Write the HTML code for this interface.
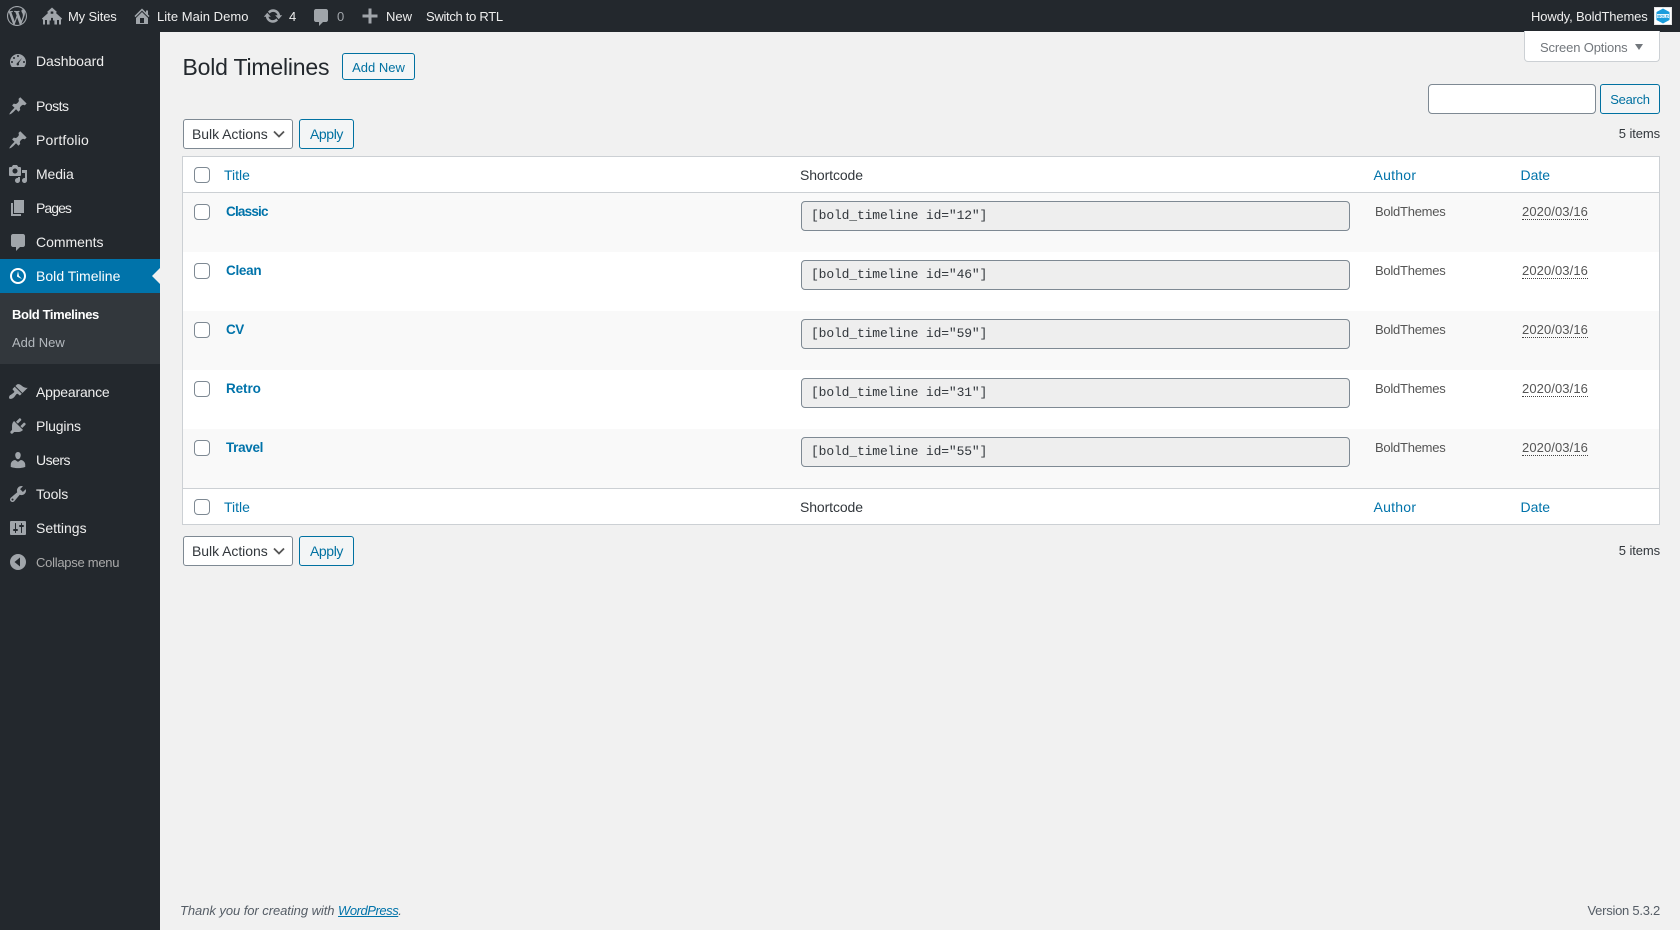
<!DOCTYPE html>
<html lang="en"><head><meta charset="utf-8"><title>Bold Timelines</title>
<style>
html,body{margin:0;padding:0;width:1680px;height:930px;overflow:hidden;background:#f1f1f1;font-family:"Liberation Sans",sans-serif;color:#32373c}
div,a,span.t,svg.i{position:absolute}
a{text-decoration:none}
.t{position:absolute;white-space:nowrap;line-height:20px;height:20px;font-size:14px}
svg.i{fill:#a0a5aa}
.bar{left:0;top:0;width:1680px;height:32px;background:#23282d}
.side{left:0;top:32px;width:160px;height:898px;background:#23282d}
.m{color:#eee;left:36px;letter-spacing:-.3px}
.btn{box-sizing:border-box;border:1px solid #0071a1;border-radius:3px;background:#f3f5f6;color:#0071a1;font-size:13px;text-align:center;line-height:28px;white-space:nowrap}
.sel{box-sizing:border-box;left:183px;width:110px;height:30px;border:1px solid #7e8993;border-radius:3px;background:#fff;color:#32373c;font-size:14px;line-height:28px;padding-left:8px;white-space:nowrap;letter-spacing:-.05px}
.sel svg{position:absolute;left:89px;top:10px}
.cb{box-sizing:border-box;left:194px;width:16px;height:16px;border:1px solid #7e8993;border-radius:4px;background:#fff}
.row{left:183px;width:1476px;height:59px}
.odd{background:#f9f9f9}
.rt{left:226px;font-size:13.5px;font-weight:700;color:#0073aa}
.sc{box-sizing:border-box;left:801px;width:549px;height:30px;border:1px solid #7e8993;border-radius:4px;background:#eee;color:#32373c;font:13px/28px "Liberation Mono",monospace;letter-spacing:-.14px;padding-left:9px;white-space:pre}
.au{left:1375px;font-size:13px;color:#555;letter-spacing:-.25px}
.da{left:1522px;font-size:13px;color:#555;letter-spacing:.09px}
.da span{border-bottom:1px dotted #444}
.lnk{color:#0073aa}
.b{top:7px;font-size:13px;color:#eee}
</style></head><body>

<div class="bar"></div>
<svg class="i" style="left:7px;top:6px" width="20" height="20" viewBox="0 0 20 20"><path d="M20 10c0-5.51-4.49-10-10-10C4.48 0 0 4.49 0 10c0 5.52 4.48 10 10 10 5.51 0 10-4.48 10-10zM7.78 15.37L4.37 6.22c.55-.02 1.17-.08 1.17-.08.5-.06.44-1.13-.06-1.11 0 0-1.45.11-2.37.11-.18 0-.37 0-.58-.01C4.12 2.69 6.87 1.11 10 1.11c2.33 0 4.45.87 6.05 2.34-.68-.11-1.65.39-1.65 1.58 0 .74.45 1.36.9 2.1.35.61.55 1.36.55 2.46 0 1.49-1.4 5-1.4 5l-3.03-8.37c.54-.02.82-.17.82-.17.5-.05.44-1.25-.06-1.22 0 0-1.44.12-2.38.12-.87 0-2.33-.12-2.33-.12-.5-.03-.56 1.2-.06 1.22l.92.08 1.26 3.41zM17.41 10c.24-.64.74-1.87.43-4.25.7 1.29 1.05 2.71 1.05 4.25 0 3.29-1.73 6.24-4.4 7.78.97-2.59 1.94-5.2 2.92-7.78zM6.1 18.09C3.12 16.65 1.11 13.53 1.11 10c0-1.3.23-2.48.72-3.59C3.25 10.3 4.67 14.2 6.1 18.09zm4.03-6.63l2.58 6.98c-.86.29-1.76.45-2.71.45-.79 0-1.57-.11-2.29-.33.81-2.38 1.62-4.74 2.42-7.1z"/></svg>
<svg class="i" style="left:42px;top:7px" width="20" height="18" viewBox="0 0 20 18"><path fill-rule="evenodd" d="M10 .5L15 5l-1.2.9L20 11.5v.8h-1V17.5h-6.6v-4H11v-2.6H9v2.6H7.6v4H1v-5.2H0v-.8L6.2 5.9 5 5zM8.7 4.5h2.6v2.3H8.7zM3 13h2v4.500H3zM15 13h2v4.500h-2z"/></svg>
<svg class="i" style="left:132px;top:6px" width="20" height="20" viewBox="0 0 20 20"><path fill-rule="evenodd" d="M16 8.500l1.530 1.530-1.060 1.060L10 4.620l-6.470 6.470-1.060-1.060L10 2.500l4 4v-2h2v4zm-6-2.460l6 5.990V18H4v-5.970zM12 17v-5H8v5h4z"/></svg>
<svg class="i" style="left:263px;top:6px" width="20" height="20" viewBox="0 0 20 20"><path d="M10.200 3.280c3.530 0 6.430 2.610 6.920 6h2.080l-3.500 4-3.500-4h2.320c-.45-1.970-2.210-3.450-4.320-3.450-1.450 0-2.730.71-3.540 1.780L4.950 5.660C6.230 4.200 8.110 3.280 10.200 3.280zm-.4 13.440c-3.520 0-6.430-2.610-6.920-6H.8l3.500-4c1.170 1.330 2.330 2.670 3.500 4H5.480c.45 1.970 2.210 3.450 4.320 3.450 1.450 0 2.730-.71 3.540-1.780l1.710 1.950c-1.280 1.460-3.150 2.380-5.250 2.380z"/></svg>
<svg class="i" style="left:311px;top:7px" width="20" height="20" viewBox="0 0 20 20"><path d="M5 2h10c1.100 0 2 .9 2 2v9c0 1.100-.9 2-2 2h-3l-4 4v-4H5c-1.100 0-2-.9-2-2V4c0-1.100.9-2 2-2z"/></svg>
<svg class="i" style="left:360px;top:6px" width="20" height="20" viewBox="0 0 20 20"><path d="M17.500 8.500v3h-6v6h-3v-6h-6v-3h6v-6h3v6z"/></svg>
<span class="t b" style="left:68px;letter-spacing:-.15px">My Sites</span>
<span class="t b" style="left:157px;letter-spacing:.03px">Lite Main Demo</span>
<span class="t b" style="left:289px">4</span>
<span class="t b" style="left:337px;color:#a0a5aa">0</span>
<span class="t b" style="left:386px">New</span>
<span class="t b" style="left:426px;letter-spacing:-.3px">Switch to RTL</span>
<span class="t b" style="left:1531px;letter-spacing:-.14px">Howdy, BoldThemes</span>
<svg style="position:absolute;left:1654px;top:7px" width="18" height="18" viewBox="0 0 18 18"><rect width="18" height="18" fill="#e5e5e5"/><rect x="1" y="1" width="16" height="16" fill="#fff"/><path d="M9 1.500L15.500 5v8L9 16.500 2.500 13V5z" fill="#1a9ddc"/><rect x="3" y="7" width="12" height="4" fill="#fff" opacity=".9"/><text x="9" y="10.500" font-size="4" font-weight="700" text-anchor="middle" fill="#1a9ddc" font-family="Liberation Sans">BOLD</text></svg>

<div class="side"></div>
<div style="left:0;top:259px;width:160px;height:34px;background:#0073aa"></div>
<div style="left:152px;top:268px;width:0;height:0;border:8px solid transparent;border-right-color:#f1f1f1;border-left:0"></div>
<div style="left:0;top:293px;width:160px;height:71px;background:#32373c"></div>

<svg class="i" style="left:8px;top:51px" width="20" height="20" viewBox="0 0 20 20"><path fill-rule="evenodd" d="M3.760 16h12.480c1.100-1.370 1.760-3.110 1.760-5 0-4.420-3.580-8-8-8s-8 3.580-8 8c0 1.890.66 3.630 1.760 5zM10 4c.55 0 1 .45 1 1s-.45 1-1 1-1-.45-1-1 .45-1 1-1zM6 6c.55 0 1 .45 1 1s-.45 1-1 1-1-.45-1-1 .45-1 1-1zm8.010 1l-3.320 5.300c.49.49.49 1.280 0 1.770s-1.280.49-1.770 0-.49-1.280 0-1.770zM4 10c.55 0 1 .45 1 1s-.45 1-1 1-1-.45-1-1 .45-1 1-1zm12 0c.55 0 1 .45 1 1s-.45 1-1 1-1-.45-1-1 .45-1 1-1z"/></svg>
<svg class="i" style="left:8px;top:96px" width="20" height="20" viewBox="0 0 20 20"><path d="M10.440 3.020l1.820-1.820 6.360 6.350-1.830 1.820c-1.050-.68-2.480-.57-3.410.36l-.75.75c-.92.93-1.040 2.350-.35 3.410l-1.830 1.820-2.410-2.410-2.800 2.790c-.42.42-3.380 2.710-3.800 2.290s1.860-3.390 2.280-3.810l2.790-2.790L4.100 9.360l1.830-1.820c1.050.69 2.480.57 3.400-.36l.75-.75c.93-.92 1.050-2.350.36-3.410z"/></svg>
<svg class="i" style="left:8px;top:130px" width="20" height="20" viewBox="0 0 20 20"><path d="M10.440 3.020l1.820-1.820 6.360 6.350-1.830 1.820c-1.050-.68-2.480-.57-3.410.36l-.75.75c-.92.93-1.040 2.350-.35 3.410l-1.830 1.820-2.410-2.410-2.800 2.790c-.42.42-3.380 2.710-3.800 2.290s1.860-3.390 2.280-3.810l2.790-2.790L4.100 9.360l1.830-1.820c1.050.69 2.480.57 3.400-.36l.75-.75c.93-.92 1.050-2.350.36-3.410z"/></svg>
<svg class="i" style="left:8px;top:164px" width="20" height="20" viewBox="0 0 20 20"><path fill-rule="evenodd" d="M13 11V4c0-.55-.45-1-1-1h-1.670L9 1H5L3.670 3H2c-.55 0-1 .45-1 1v7c0 .55.45 1 1 1h10c.55 0 1-.45 1-1zM7 4.500c1.380 0 2.500 1.120 2.500 2.500S8.380 9.500 7 9.500 4.500 8.380 4.500 7 5.620 4.500 7 4.500zM14 6h5v10.500c0 1.380-1.120 2.500-2.500 2.500S14 17.880 14 16.500s1.120-2.500 2.500-2.500c.17 0 .34.02.5.05V9h-3V6zm-4 8.050V13h2v3.500c0 1.380-1.120 2.500-2.500 2.500S7 17.880 7 16.500 8.120 14 9.500 14c.17 0 .34.02.5.05z"/></svg>
<svg class="i" style="left:8px;top:198px" width="20" height="20" viewBox="0 0 20 20"><path d="M6 15V2h10v13H6zm-1 1h8v2H3V5h2v11z"/></svg>
<svg class="i" style="left:8px;top:232px" width="20" height="20" viewBox="0 0 20 20"><path d="M5 2h10c1.100 0 2 .9 2 2v9c0 1.100-.9 2-2 2h-3l-4 4v-4H5c-1.100 0-2-.9-2-2V4c0-1.100.9-2 2-2z"/></svg>
<svg class="i" style="left:8px;top:266px;fill:#fff" width="20" height="20" viewBox="0 0 20 20"><path fill-rule="evenodd" d="M10 2c4.420 0 8 3.580 8 8s-3.580 8-8 8-8-3.580-8-8 3.580-8 8-8zm0 14c3.310 0 6-2.690 6-6s-2.690-6-6-6-6 2.690-6 6 2.690 6 6 6zm-.71-5.290c.07.05.14.1.23.15l-.02.02L14 13l-3.030-3.190L10 5l-.97 4.810h.01c0 .02-.01.05-.02.09S9 9.970 9 10c0 .28.1.52.29.71z"/></svg>
<svg class="i" style="left:8px;top:382px" width="20" height="20" viewBox="0 0 20 20"><path d="M14.480 11.060L7.410 3.990l1.500-1.500c.5-.56 2.300-.47 3.510.32 1.210.8 1.430 1.280 2.910 2.100 1.180.64 2.450 1.260 4.450.85zm-.71.71L6.700 4.700 4.930 6.470c-.39.39-.39 1.020 0 1.410l1.060 1.060c.39.39.39 1.030 0 1.420-.6.6-1.430 1.150-2.210 1.730-.35.260-.7.530-1.010.84C1.430 13.230 1.090 14.910 1.040 15.590c-.05.69.65 1.390 1.340 1.340.680-.05 2.360-.39 3.660-1.730.31-.31.580-.66.840-1.010.58-.78 1.130-1.610 1.730-2.210.39-.39 1.030-.39 1.420 0l1.060 1.060c.39.39 1.020.39 1.410 0z"/></svg>
<svg class="i" style="left:8px;top:416px" width="20" height="20" viewBox="0 0 20 20"><path d="M13.110 4.360L9.870 7.600 8 5.730l3.240-3.240c.35-.34 1.050-.2 1.560.32.52.51.66 1.210.31 1.550zm-8 1.770l.91-1.120 9.010 9.010-1.190.84c-.71.71-2.630 1.160-3.820 1.160H6.140L4.900 17.260c-.59.59-1.540.59-2.120 0-.59-.58-.59-1.530 0-2.120l1.240-1.240v-3.880c0-1.130.4-3.190 1.090-3.890zm7.260 3.970l3.240-3.240c.34-.35 1.040-.21 1.550.31.52.51.66 1.210.31 1.550l-3.240 3.250z"/></svg>
<svg class="i" style="left:8px;top:450px" width="20" height="20" viewBox="0 0 20 20"><path d="M10 9.250c-2.270 0-2.730-3.440-2.730-3.440C7 4.020 7.820 2 9.970 2c2.160 0 2.980 2.020 2.710 3.810 0 0-.41 3.440-2.680 3.440zm0 2.570L12.720 10c2.390 0 4.520 2.330 4.520 4.530v2.490s-3.650 1.130-7.240 1.130c-3.650 0-7.240-1.130-7.240-1.130v-2.490c0-2.250 1.940-4.480 4.470-4.480z"/></svg>
<svg class="i" style="left:8px;top:484px" width="20" height="20" viewBox="0 0 20 20"><path fill-rule="evenodd" d="M16.680 9.770c-1.340 1.340-3.300 1.670-4.950.99l-5.410 6.520c-.99.99-2.590.99-3.580 0s-.99-2.590 0-3.570l6.520-5.420c-.68-1.650-.35-3.610.99-4.950 1.280-1.280 3.120-1.620 4.720-1.060l-2.890 2.890 2.820 2.820 2.860-2.870c.53 1.580.18 3.390-1.080 4.690zM3.810 16.210c.4.39 1.040.39 1.430 0 .4-.4.4-1.040 0-1.430-.39-.4-1.030-.4-1.430 0-.39.39-.39 1.030 0 1.430z"/></svg>
<svg class="i" style="left:8px;top:518px" width="20" height="20" viewBox="0 0 20 20"><path fill-rule="evenodd" d="M18 16V4c0-.55-.45-1-1-1H3c-.55 0-1 .45-1 1v12c0 .55.45 1 1 1h14c.55 0 1-.45 1-1zM8 11h1c.55 0 1 .45 1 1s-.45 1-1 1H8v1.500c0 .28-.22.5-.5.5s-.5-.22-.5-.5V13H6c-.55 0-1-.45-1-1s.45-1 1-1h1V5.500c0-.28.22-.5.5-.5s.5.22.5.5V11zm5-2h-1c-.55 0-1-.45-1-1s.45-1 1-1h1V5.500c0-.28.22-.5.5-.5s.5.22.5.5V7h1c.55 0 1 .45 1 1s-.45 1-1 1h-1v5.500c0 .28-.22.5-.5.5s-.5-.22-.5-.5V9z"/></svg>
<svg class="i" style="left:8px;top:552px" width="20" height="20" viewBox="0 0 20 20"><path fill-rule="evenodd" d="M10 2a8 8 0 1 1 0 16 8 8 0 0 1 0-16zm2 3.500L6.500 10l5.500 4.500z"/></svg>

<span class="t m" style="top:51px;letter-spacing:-.06px">Dashboard</span>
<span class="t m" style="top:96px;letter-spacing:-.5px">Posts</span>
<span class="t m" style="top:130px;letter-spacing:.18px">Portfolio</span>
<span class="t m" style="top:164px;letter-spacing:-.1px">Media</span>
<span class="t m" style="top:198px;letter-spacing:-.94px">Pages</span>
<span class="t m" style="top:232px;letter-spacing:-.03px">Comments</span>
<span class="t m" style="top:266px;color:#fff;letter-spacing:.03px">Bold Timeline</span>
<span class="t" style="left:12px;top:305px;font-size:13px;font-weight:700;color:#fff;letter-spacing:-.38px">Bold Timelines</span>
<span class="t" style="left:12px;top:333px;font-size:13px;color:#b4b9be">Add New</span>
<span class="t m" style="top:382px;letter-spacing:-.2px">Appearance</span>
<span class="t m" style="top:416px;letter-spacing:-.15px">Plugins</span>
<span class="t m" style="top:450px;letter-spacing:-.5px">Users</span>
<span class="t m" style="top:484px;letter-spacing:-.1px">Tools</span>
<span class="t m" style="top:518px;letter-spacing:0">Settings</span>
<span class="t m" style="top:553px;font-size:13px;color:#aaa;letter-spacing:-.27px">Collapse menu</span>

<div style="box-sizing:border-box;left:1524px;top:31px;width:136px;height:31px;background:#fff;border:1px solid #ccd0d4;border-top:0;border-radius:0 0 4px 4px"></div>
<span class="t" style="left:1540px;top:38px;font-size:13px;color:#72777c;letter-spacing:-.15px">Screen Options</span>
<div style="left:1635px;top:44px;width:0;height:0;border-left:4px solid transparent;border-right:4px solid transparent;border-top:6px solid #72777c"></div>

<span class="t" style="left:182.5px;top:54px;height:26px;line-height:26px;font-size:23px;color:#23282d;letter-spacing:-.2px">Bold Timelines</span>
<div class="btn" style="left:342px;top:53px;width:73px;height:27px;line-height:27px">Add New</div>

<div style="box-sizing:border-box;left:1428px;top:84px;width:168px;height:30px;background:#fff;border:1px solid #7e8993;border-radius:4px"></div>
<div class="btn" style="left:1600px;top:84px;width:60px;height:30px;line-height:30px;letter-spacing:-.3px">Search</div>
<span class="t" style="right:20px;top:124px;font-size:13px;color:#32373c;letter-spacing:-.1px">5 items</span>

<div class="sel" style="top:119px">Bulk Actions<svg width="12" height="8" viewBox="0 0 12 8"><path d="M1 1.500l5 5 5-5" fill="none" stroke="#555" stroke-width="1.800"/></svg></div>
<div class="btn" style="left:299px;top:119px;width:55px;height:30px;font-size:14px;letter-spacing:-.4px">Apply</div>

<div style="box-sizing:border-box;left:182px;top:156px;width:1478px;height:369px;background:#fff;border:1px solid #ccd0d4"></div>
<div style="left:183px;top:192px;width:1476px;height:1px;background:#ccd0d4"></div>
<div class="row odd" style="top:193px"></div>
<div class="row odd" style="top:311px"></div>
<div class="row odd" style="top:429px"></div>
<div style="left:183px;top:488px;width:1476px;height:1px;background:#ccd0d4"></div>

<div class="cb" style="top:167px"></div>
<a class="t lnk" style="left:224px;top:165px">Title</a>
<span class="t" style="left:800px;top:165px;letter-spacing:-.1px">Shortcode</span>
<a class="t lnk" style="left:1373.5px;top:165px;letter-spacing:.25px">Author</a>
<a class="t lnk" style="left:1520.5px;top:165px">Date</a>

<div class="cb" style="top:204px"></div><a class="t rt" style="top:202px;letter-spacing:-.8px">Classic</a>
<div class="sc" style="top:201px">[bold_timeline id="12"]</div>
<span class="t au" style="top:202px">BoldThemes</span><span class="t da" style="top:202px"><span>2020/03/16</span></span>

<div class="cb" style="top:263px"></div><a class="t rt" style="top:261px;letter-spacing:-.3px">Clean</a>
<div class="sc" style="top:260px">[bold_timeline id="46"]</div>
<span class="t au" style="top:261px">BoldThemes</span><span class="t da" style="top:261px"><span>2020/03/16</span></span>

<div class="cb" style="top:322px"></div><a class="t rt" style="top:320px;letter-spacing:-.5px">CV</a>
<div class="sc" style="top:319px">[bold_timeline id="59"]</div>
<span class="t au" style="top:320px">BoldThemes</span><span class="t da" style="top:320px"><span>2020/03/16</span></span>

<div class="cb" style="top:381px"></div><a class="t rt" style="top:379px;letter-spacing:-.1px">Retro</a>
<div class="sc" style="top:378px">[bold_timeline id="31"]</div>
<span class="t au" style="top:379px">BoldThemes</span><span class="t da" style="top:379px"><span>2020/03/16</span></span>

<div class="cb" style="top:440px"></div><a class="t rt" style="top:438px;letter-spacing:-.33px">Travel</a>
<div class="sc" style="top:437px">[bold_timeline id="55"]</div>
<span class="t au" style="top:438px">BoldThemes</span><span class="t da" style="top:438px"><span>2020/03/16</span></span>

<div class="cb" style="top:499px"></div>
<a class="t lnk" style="left:224px;top:497px">Title</a>
<span class="t" style="left:800px;top:497px;letter-spacing:-.1px">Shortcode</span>
<a class="t lnk" style="left:1373.5px;top:497px;letter-spacing:.25px">Author</a>
<a class="t lnk" style="left:1520.5px;top:497px">Date</a>

<div class="sel" style="top:536px">Bulk Actions<svg width="12" height="8" viewBox="0 0 12 8"><path d="M1 1.500l5 5 5-5" fill="none" stroke="#555" stroke-width="1.800"/></svg></div>
<div class="btn" style="left:299px;top:536px;width:55px;height:30px;font-size:14px;letter-spacing:-.4px">Apply</div>
<span class="t" style="right:20px;top:541px;font-size:13px;color:#32373c;letter-spacing:-.1px">5 items</span>

<span class="t" style="left:180px;top:901px;font-size:13px;font-style:italic;color:#555d66;letter-spacing:-.06px">Thank you for creating with <span style="color:#0073aa;text-decoration:underline;letter-spacing:-.45px">WordPress</span>.</span>
<span class="t" style="right:20px;top:901px;font-size:13px;color:#555d66;letter-spacing:-.26px">Version 5.3.2</span>
</body></html>
